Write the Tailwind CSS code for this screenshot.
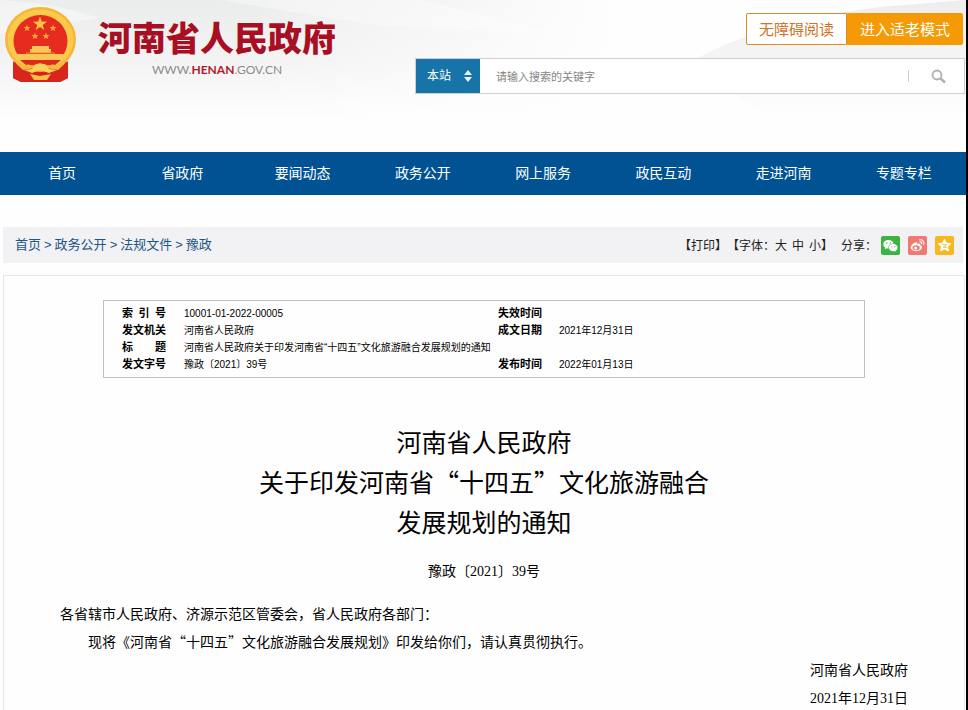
<!DOCTYPE html>
<html lang="zh-CN">
<head>
  <meta charset="UTF-8" />
  <meta name="viewport" content="width=device-width, initial-scale=1.0"/>
  <title>河南省人民政府</title>
  <script src="https://cdn.jsdelivr.net/npm/@tailwindcss/browser@4"></script>
</head>
<body class="min-h-screen overflow-x-hidden border-r-2 border-black bg-[#fefefe] font-['Noto_Sans_CJK_SC',sans-serif] text-black">

  <!-- Header -->
  <header class="relative isolate flex h-[152px] items-start justify-between pr-px">
    <svg class="absolute inset-0 -z-10 h-[120px] w-full" viewBox="0 0 966 120" preserveAspectRatio="none" aria-hidden="true">
      <defs>
        <linearGradient id="sky" x1="0" y1="0" x2="0" y2="1">
          <stop offset="0" stop-color="#ebecec"/>
          <stop offset="0.5" stop-color="#f3f3f3"/>
          <stop offset="1" stop-color="#fefefe"/>
        </linearGradient>
        <linearGradient id="veil" x1="0" y1="0" x2="1" y2="0">
          <stop offset="0" stop-color="#fefefe" stop-opacity="0"/>
          <stop offset="1" stop-color="#fefefe"/>
        </linearGradient>
        <linearGradient id="fold" x1="0" y1="0" x2="0" y2="1">
          <stop offset="0" stop-color="#ededee"/>
          <stop offset="1" stop-color="#fdfdfd"/>
        </linearGradient>
      </defs>
      <path d="M0 0H620V120H0Z" fill="url(#sky)"/>
      <path d="M0 0Q50 2 100 18L0 34Z" fill="#f8f8f8" opacity="0.6"/>
      <path d="M220 0H420L560 34 380 26Z" fill="#fafafa" opacity="0.5"/>
      <path d="M250 0H621V120H250Z" fill="url(#veil)"/>
      <path d="M690 62Q760 22 880 7L966 0V112H760Z" fill="url(#fold)"/>
    </svg>

    <a href="#" class="flex items-start gap-[22px] pt-[7px] pl-[5px]">
      <svg class="h-[76px] w-[71px]" viewBox="0 0 71 76" aria-hidden="true">
        <path d="M10 52 8 71 16 75 55 75 63 71 61 52Z" fill="#d5231c"/>
        <ellipse cx="35.500" cy="32.500" rx="35.500" ry="32.500" fill="#f4b738"/>
        <ellipse cx="35.500" cy="32.500" rx="33" ry="30" fill="#fbc94c"/>
        <ellipse cx="35.500" cy="34" rx="27" ry="26" fill="#e62b1f"/>
        <path d="M35 9.500 36.800 14.600 42 14.700 37.800 17.900 39.300 23 35 20 30.700 23 32.200 17.900 28 14.700 33.200 14.600Z" fill="#f9c441"/>
        <g fill="#f5a93a">
          <path id="star" d="M22 17.500 22.900 20 25.500 20 23.500 21.700 24.200 24.200 22 22.700 19.800 24.200 20.500 21.700 18.500 20 21.100 20Z"/>
          <use href="#star" x="26"/>
          <use href="#star" x="8" y="8"/>
          <use href="#star" x="19" y="8"/>
        </g>
        <path d="M27 39H44V42H46V46H25V42H27Z" fill="#fbc657"/>
        <path d="M11 47H60L57 53H14Z" fill="#fbc657"/>
        <path d="M21 46H50" stroke="#e8912c"/>
        <path d="M15 53H56L50 58Q35 53 21 58Z" fill="#dd281e"/>
        <path d="M10 52Q20 63 35 56 51 63 61 52L58 62Q46 67 35 60 25 67 13 62Z" fill="#f7b93c"/>
        <path d="M8 54 18 63 30 61 24 75H16L8 71ZM63 54 53 63 41 61 47 75H55L63 71Z" fill="#d8261d"/>
        <path d="M19 63 27 62 31 57H40L44 62 52 63 44 66 35 63 27 66Z" fill="#fbd05d"/>
        <path d="M25 67 35 69 46 67 42 73H29Z" fill="#f8c048"/>
      </svg>
      <span class="flex flex-col items-center">
        <span class="pt-2 text-[34px] leading-[44px] font-black whitespace-nowrap text-[#a90f23]">河南省人民政府</span>
        <span class="font-['Lato',sans-serif] text-xs leading-[22px] text-[#8c8c8c]">WWW.<span class="font-bold text-[#b01c30]">HENAN</span>.GOV.CN</span>
      </span>
    </a>

    <div class="flex w-[57%] flex-col items-end pt-[13px]">
      <div class="mr-[2px] flex text-[15px] leading-[30px]">
        <button type="button" class="rounded-l-xs border border-[#e08a2c] bg-white px-3 text-[#cf7327]">无障碍阅读</button>
        <button type="button" class="rounded-r-xs border border-[#f59a04] bg-[#f59a04] px-3 text-white">进入适老模式</button>
      </div>
      <form class="mt-[13px] flex h-9 w-full border border-[#ccd0d2] bg-white">
        <div class="relative w-16 bg-[#1674a8] text-white">
          <select aria-label="搜索范围" class="h-full w-full appearance-none pb-[2px] pl-[11px] text-xs">
            <option>本站</option>
          </select>
          <svg class="pointer-events-none absolute top-[11px] right-2 h-3 w-2" viewBox="0 0 8 12" fill="#e8f4fa" aria-hidden="true"><path d="M4 0 8 5H0ZM4 12 0 7H8Z"/></svg>
        </div>
        <input type="text" aria-label="搜索" placeholder="请输入搜索的关键字" class="min-w-0 flex-1 px-4 text-[11px] outline-none placeholder:text-[#858585]" />
        <span class="my-auto h-3 w-px bg-[#d0d0d0]"></span>
        <button type="button" aria-label="搜索" class="flex w-[55px] items-center justify-center pl-1">
          <svg class="h-[15px] w-[15px]" viewBox="0 0 15 15" fill="none" stroke="#b0b0b0" aria-hidden="true"><circle cx="6" cy="6" r="4.500" stroke-width="1.800"/><path d="M9.500 9.500 14 13.500" stroke-width="2.400"/></svg>
        </button>
      </form>
    </div>
  </header>

  <!-- Navigation -->
  <nav class="grid h-[43px] grid-cols-8 items-center bg-[#005293] px-[2px] pb-[3px] text-center text-sm text-white">
    <a href="#">首页</a>
    <a href="#">省政府</a>
    <a href="#">要闻动态</a>
    <a href="#">政务公开</a>
    <a href="#">网上服务</a>
    <a href="#">政民互动</a>
    <a href="#">走进河南</a>
    <a href="#">专题专栏</a>
  </nav>

  <!-- Breadcrumb and tools -->
  <div class="mx-[3px] mt-8 flex h-9 items-center justify-between bg-[#f2f1f3] pr-[9px] pl-3">
    <div class="flex gap-[3px] font-['Liberation_Sans','Noto_Sans_CJK_SC',sans-serif] text-[13px] text-[#1d5687]">
      <a href="#">首页</a><span>&gt;</span>
      <a href="#">政务公开</a><span>&gt;</span>
      <a href="#">法规文件</a><span>&gt;</span>
      <a href="#">豫政</a>
    </div>
    <div class="flex items-center text-xs text-[#222]">
      <button type="button">【打印】</button>
      <div class="flex">
        <span>【字体：</span>
        <span class="flex gap-[5px]"><button type="button">大</button><button type="button">中</button><button type="button">小</button></span>
        <span>】</span>
      </div>
      <span class="ml-2">分享：</span>
      <div class="ml-1 flex gap-2">
        <a href="#" aria-label="微信" class="flex h-[19px] w-[19px] items-center justify-center rounded-xs bg-[#3cb440]">
          <svg class="h-[15px] w-[15px]" viewBox="0 0 15 15" fill="#fff"><path d="M5.500 2C2.400 2 .3 3.900.3 6.300c0 1.400.7 2.500 1.800 3.300L1.700 11.300 3.600 10.300c.6.200 1.200.3 1.900.3C5 7.800 7 5.500 10.700 5.400 10.200 3.400 8.100 2 5.500 2Z"/><path d="M10.300 6.100c-2.500 0-4.400 1.600-4.400 3.600s1.900 3.500 4.400 3.500c.5 0 1-.1 1.400-.2l1.600.8-.4-1.400c1.100-.7 1.700-1.600 1.700-2.700 0-2-1.900-3.600-4.300-3.600Z"/><g fill="#3cb440"><circle cx="3.800" cy="5" r=".7"/><circle cx="7.200" cy="5" r=".7"/><circle cx="8.900" cy="8.800" r=".6"/><circle cx="11.800" cy="8.800" r=".6"/></g></svg>
        </a>
        <a href="#" aria-label="微博" class="flex h-[19px] w-[19px] items-center justify-center rounded-xs bg-[#f07a72]">
          <svg class="h-[15px] w-[15px]" viewBox="0 0 15 15" fill="none"><path d="M6 4.200C4.300 4.200.8 7 .8 9.600c0 2 2.400 3.600 5.300 3.600 3.500 0 5.900-2 5.900-3.900 0-1.200-1-1.800-1.800-2 .5-1.400-.7-2-2.900-1.100C7.600 5 7.200 4.200 6 4.200Z" fill="#fff"/><ellipse cx="6.100" cy="9.700" rx="3.700" ry="2.500" fill="#f07a72"/><circle cx="5.700" cy="9.900" r="1.500" fill="#fff"/><path d="M9.700 1.800c2.800-.5 4.800 1.600 4 4.500M9.900 3.900c1.300-.2 2.200.7 1.800 2" stroke="#fff" stroke-width="1.100" stroke-linecap="round"/></svg>
        </a>
        <a href="#" aria-label="QQ空间" class="flex h-[19px] w-[19px] items-center justify-center rounded-xs bg-[#f8b81c]">
          <svg class="h-[15px] w-[15px]" viewBox="0 0 15 15"><path d="M7.500 1.200 9.400 5.200 13.800 5.700 10.600 8.700 11.500 13 7.500 10.900 3.500 13 4.400 8.700 1.200 5.700 5.600 5.200Z" fill="#fff" stroke="#fff" stroke-linejoin="round"/><path d="M5.200 6.500Q8 5.900 9.500 6.600L6.300 9.200Q8 9.700 9.800 9.200" fill="none" stroke="#f8b81c" stroke-width=".9"/></svg>
        </a>
      </div>
    </div>
  </div>

  <!-- Document -->
  <main class="mt-3 mr-px ml-[3px] min-h-[436px] border border-b-0 border-[#e6e6e6] px-14 pt-6">
    <div class="mx-auto max-w-[762px] border border-[#bfbfbf] py-1 pl-[18px]">
      <table class="w-full table-fixed text-left font-['Liberation_Sans','Noto_Sans_CJK_SC',sans-serif] text-[10px] leading-[17px]">
        <colgroup><col class="w-[62px]"><col class="w-[314px]"><col class="w-[61px]"><col></colgroup>
        <tbody>
          <tr>
            <th scope="row" class="text-[11px]"><span class="flex w-11 justify-between"><span>索</span><span>引</span><span>号</span></span></th>
            <td>10001-01-2022-00005</td>
            <th scope="row" class="text-[11px]">失效时间</th>
            <td></td>
          </tr>
          <tr>
            <th scope="row" class="text-[11px]">发文机关</th>
            <td>河南省人民政府</td>
            <th scope="row" class="text-[11px]">成文日期</th>
            <td>2021年12月31日</td>
          </tr>
          <tr>
            <th scope="row" class="text-[11px]"><span class="flex w-11 justify-between"><span>标</span><span>题</span></span></th>
            <td colspan="3">河南省人民政府关于印发河南省“十四五”文化旅游融合发展规划的通知</td>
          </tr>
          <tr>
            <th scope="row" class="text-[11px]">发文字号</th>
            <td>豫政〔2021〕39号</td>
            <th scope="row" class="text-[11px]">发布时间</th>
            <td>2022年01月13日</td>
          </tr>
        </tbody>
      </table>
    </div>

    <h1 class="mt-[43px] text-center text-[25px] leading-[40px] font-normal">河南省人民政府<br>关于印发河南省“十四五”文化旅游融合<br>发展规划的通知</h1>
    <p class="mt-[17px] text-center font-['Liberation_Serif','Noto_Sans_CJK_SC',serif] text-sm leading-[28px]">豫政〔2021〕39号</p>

    <div class="mt-[13px] text-sm leading-[28px]">
      <p>各省辖市人民政府、济源示范区管委会，省人民政府各部门：</p>
      <p class="indent-7">现将《河南省“十四五”文化旅游融合发展规划》印发给你们，请认真贯彻执行。</p>
      <div class="pt-[2px] text-right font-['Liberation_Serif','Noto_Sans_CJK_SC',serif]">
        <p>河南省人民政府</p>
        <p>2021年12月31日</p>
      </div>
    </div>
  </main>
</body>
</html>
